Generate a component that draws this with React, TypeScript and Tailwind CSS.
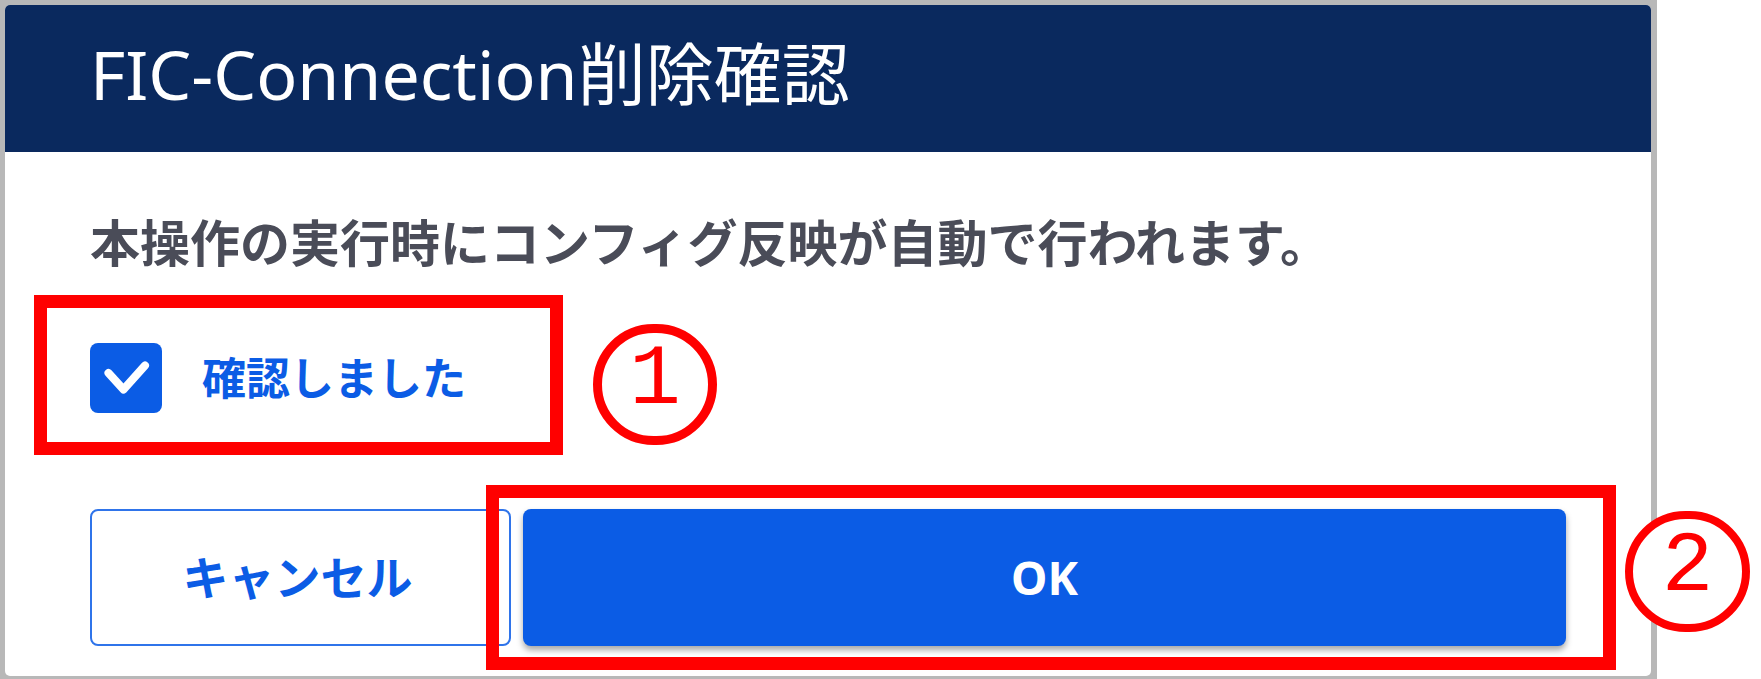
import React from 'react';

const jp = { fontFamily: '"Noto Sans", "Noto Sans CJK JP", sans-serif' };

const Marker: React.FC<{ n: string; className: string }> = ({ n, className }) => (
    <div
        className={`absolute flex items-center justify-center rounded-full bg-white text-[#ff0000] ${className}`}
        style={{ fontFamily: '"Liberation Mono", "DejaVu Sans Mono", monospace', borderColor: '#ff0000' }}
    >
        <span className="text-[86px] leading-none -mt-[10px]">{n}</span>
    </div>
);

export default function App() {
    return (
        <div className="relative h-[679px] w-[1761px] overflow-hidden bg-white" style={jp}>
            {/* backdrop behind the modal */}
            <div className="h-full w-[1657px] bg-[#b8b8b8] pl-[5px] pr-[6px] pt-[5px] pb-[3px]">
                <div className="flex h-full flex-col overflow-hidden rounded-[5px] bg-white">
                    <div className="flex h-[147px] shrink-0 items-center bg-[#0a295e] pl-[85px]">
                        <h1 className="text-[68px] font-normal leading-none text-white -mt-[10px]">
                            FIC-Connection削除確認
                        </h1>
                    </div>

                    <div className="flex flex-col px-[85px]">
                        <p className="mt-[61px] text-[50px] font-bold leading-[60px] text-[#4a4c58]">
                            本操作の実行時にコンフィグ反映が自動で行われます。
                        </p>

                        <label className="mt-[70px] flex h-[70px] items-center gap-[40px]">
                            <span className="flex h-[70px] w-[72px] items-center justify-center rounded-[8px] bg-[#0b5ce5]">
                                <svg width="72" height="70" viewBox="0 0 72 70">
                                    <polyline
                                        points="18.5,30 33.5,46.5 55,22.5"
                                        fill="none"
                                        stroke="white"
                                        strokeWidth="8"
                                        strokeLinecap="round"
                                        strokeLinejoin="round"
                                    />
                                </svg>
                            </span>
                            <span className="text-[44px] font-bold leading-none text-[#0b5ce5]">確認しました</span>
                        </label>

                        <div className="mt-[96px] flex gap-[12px]">
                            <button className="flex h-[137px] w-[421px] items-center justify-center rounded-[8px] border-2 border-[#2f74ea] bg-white pr-[6px] text-[46px] font-bold text-[#0b5ce5]">
                                キャンセル
                            </button>
                            <button className="flex h-[137px] flex-1 items-center justify-center rounded-[8px] bg-[#0b5ce5] text-[46px] font-bold text-white shadow-[0_4px_6px_rgba(0,0,0,0.35)]">
                                OK
                            </button>
                        </div>
                    </div>
                </div>
            </div>

            {/* annotations */}
            <div className="absolute left-[34px] top-[295px] h-[160px] w-[529px] border-[13px] border-[#ff0000]" />
            <Marker n="1" className="left-[593px] top-[324px] h-[121px] w-[124px] border-[9px]" />
            <div className="absolute left-[486px] top-[485px] h-[185px] w-[1130px] border-[13px] border-[#ff0000]" />
            <Marker n="2" className="left-[1625px] top-[511px] h-[121px] w-[125px] border-[8px]" />
        </div>
    );
}
